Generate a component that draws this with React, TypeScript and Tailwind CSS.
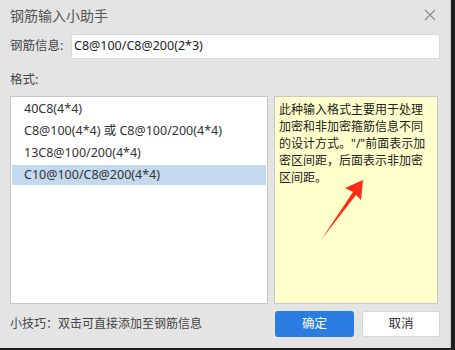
import React from "react";

const font = { fontFamily: '"Noto Sans", "Noto Sans CJK SC", sans-serif' };

export default function App() {
  const items = [
    "40C8(4*4)",
    "C8@100(4*4) 或 C8@100/200(4*4)",
    "13C8@100/200(4*4)",
  ];
  return (
    <div className="w-[455px] h-[350px] bg-[#1e1e1e] overflow-hidden" style={font}>
      <div className="w-[451px] h-[348px] bg-[#e4e4e4] border-r border-[#c8c8c8] flex flex-col px-[10px]">
        <div className="h-[30px] flex items-center justify-between">
          <span className="text-[14px] text-[#555]">钢筋输入小助手</span>
          <svg width="12" height="12" viewBox="0 0 12 12" className="mr-[4px]">
            <path d="M1 1 L11 11 M11 1 L1 11" stroke="#888" strokeWidth="1.1" />
          </svg>
        </div>
        <div className="flex items-center mt-[4px] h-[25px]">
          <span className="text-[12.5px] text-[#444] w-[61px] shrink-0">钢筋信息:</span>
          <div className="w-[369px] h-[25px] bg-white border border-[#d8d8d8] rounded-[2px] flex items-center px-[2px] text-[12.5px] text-[#222]">
            C8@100/C8@200(2*3)
          </div>
        </div>
        <div className="text-[12.5px] text-[#444] mt-[12px] h-[18px] leading-[18px]">格式:</div>
        <div className="flex gap-[6px] mt-[7px] h-[208px]">
          <div className="w-[258px] bg-white border border-[#c9c9c9] pt-[1px] px-[1px]">
            {items.map((t, i) => (
              <div key={i} className="h-[22px] flex items-center pl-[12px] text-[12.5px] text-[#333]">
                {t}
              </div>
            ))}
            <div className="mt-[1px] h-[20px] bg-[#c3d9ef] flex items-center pl-[12px] text-[12.5px] text-[#333]">
              C10@100/C8@200(4*4)
            </div>
          </div>
          <div className="relative w-[164px] bg-[#ffffcc] border border-[#c9c9c9] px-[4px] pt-[4px] text-[12px] leading-[17px] text-[#222]">
            此种输入格式主要用于处理<br />
            加密和非加密箍筋信息不同<br />
            的设计方式。"/"前面表示加<br />
            密区间距，后面表示非加密<br />
            区间距。
            <svg
              className="absolute left-[44px] top-[81px]"
              width="48"
              height="66"
              viewBox="0 0 48 66"
            >
              <path d="M2 62 L34 14 L26 10 L44 2 L42 22 L37 17 Z" fill="#ff2a1a" />
            </svg>
          </div>
        </div>
        <div className="flex items-center justify-between mt-[7px] h-[26px]">
          <span className="text-[12px] text-[#444]">小技巧：双击可直接添加至钢筋信息</span>
          <div className="flex gap-[8px]">
            <button className="w-[79px] h-[26px] bg-[#2b7de1] rounded-[3px] text-white text-[12.5px]">确定</button>
            <button className="w-[78px] h-[26px] bg-white border border-[#d4d4d4] rounded-[3px] text-[#333] text-[12.5px]">取消</button>
          </div>
        </div>
      </div>
    </div>
  );
}
